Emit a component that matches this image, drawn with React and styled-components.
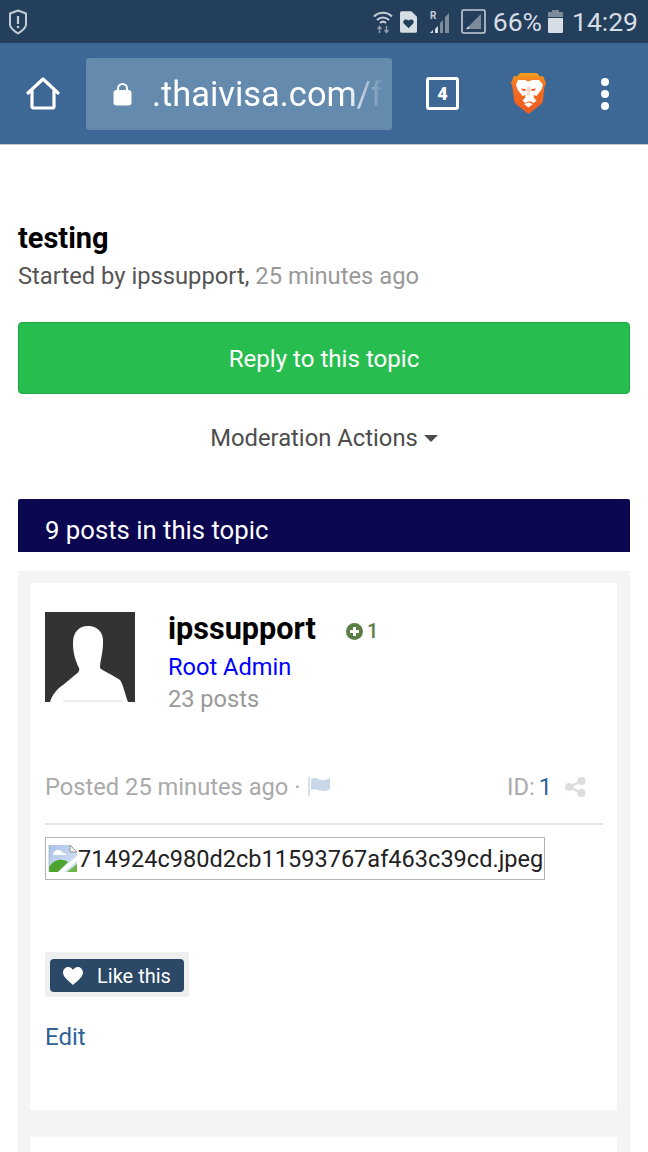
import styled, { createGlobalStyle } from 'styled-components';

const Global = createGlobalStyle`
  html, body {
    margin: 0;
    padding: 0;
    background: #fff;
    font-family: Roboto, "Liberation Sans", sans-serif;
  }
  * { box-sizing: border-box; }
`;

const Screen = styled.div`
  width: 648px;
  height: 1152px;
  overflow: hidden;
  display: flex;
  flex-direction: column;
`;

const StatusBar = styled.div`
  height: 43px;
  flex: none;
  background: #243f5c;
  display: flex;
  align-items: center;
  justify-content: space-between;
  padding: 0 10px 0 8px;
  color: #d6dde4;
`;

const StatusRight = styled.div`
  display: flex;
  align-items: center;
`;

const StatusText = styled.span`
  font-size: 26.5px;
  line-height: 43px;
  margin-left: ${(p) => p.$left || 0}px;
`;

const StatusIcon = styled.svg`
  display: block;
  margin-left: ${(p) => p.$left || 0}px;
`;

const Toolbar = styled.div`
  height: 102px;
  flex: none;
  background: #3d6794;
  border-bottom: 1px solid #c4c8cc;
  display: flex;
  align-items: center;
  padding: 0 0 0 26px;
`;

const UrlBox = styled.div`
  width: 306px;
  height: 72px;
  margin-left: 26px;
  background: #648aae;
  border-radius: 3px;
  display: flex;
  align-items: center;
  padding-left: 27px;
`;

const UrlText = styled.div`
  width: 236px;
  margin-left: 20px;
  font-size: 34.4px;
  color: #fff;
  white-space: nowrap;
  mask-image: linear-gradient(to right, #000 0, #000 195px, transparent 232px);
`;

const TabCount = styled.div`
  width: 33px;
  height: 33px;
  margin-left: 34px;
  border: 3px solid #fff;
  border-radius: 3px;
  color: #fff;
  font-size: 18px;
  font-weight: 900;
  display: flex;
  align-items: center;
  justify-content: center;
`;

const Dots = styled.div`
  margin-left: 55px;
  display: flex;
  flex-direction: column;
  gap: 4px;
`;

const Dot = styled.span`
  width: 8px;
  height: 8px;
  border-radius: 50%;
  background: #fff;
`;

const Content = styled.div`
  flex: 1;
  padding: 76px 18px 0;
`;

const Title = styled.h1`
  margin: 0;
  font-size: 29px;
  line-height: 34px;
  font-weight: 700;
  color: #000;
`;

const Byline = styled.div`
  margin-top: 6px;
  font-size: 23.75px;
  line-height: 30px;
  color: #555;
`;

const Muted = styled.span`
  color: #999;
`;

const ReplyButton = styled.div`
  margin-top: 31px;
  height: 72px;
  background: #28bd4f;
  border: 1px solid #22a544;
  border-radius: 4px;
  color: #fff;
  font-size: 24.1px;
  padding-top: 1px;
  display: flex;
  align-items: center;
  justify-content: center;
`;

const Moderation = styled.div`
  margin-top: 28px;
  height: 32px;
  display: flex;
  align-items: center;
  justify-content: center;
  gap: 6px;
  font-size: 23.8px;
  color: #4d4d4d;
`;

const Caret = styled.span`
  width: 0;
  height: 0;
  border-left: 7px solid transparent;
  border-right: 7px solid transparent;
  border-top: 7px solid #4d4d4d;
`;

const TopicBar = styled.div`
  margin-top: 45px;
  height: 53px;
  background: #0a0650;
  color: #fff;
  font-size: 25.7px;
  padding: 15px 0 0 27px;
  line-height: 32px;
  border-radius: 2px 2px 0 0;
`;

const Feed = styled.div`
  margin-top: 19px;
  background: #f4f4f4;
  padding: 12px 13px 12px 12px;
  display: flex;
  flex-direction: column;
  gap: 27px;
`;

const Post = styled.div`
  background: #fff;
  height: ${(p) => p.$height}px;
  padding: 29px 14px 0 15px;
`;

const Author = styled.div`
  display: flex;
`;

const Avatar = styled.svg`
  width: 90px;
  height: 90px;
  display: block;
  flex: none;
`;

const AuthorInfo = styled.div`
  margin-left: 33px;
  margin-top: -3px;
`;

const NameRow = styled.div`
  display: flex;
  align-items: center;
  height: 38px;
`;

const Name = styled.span`
  font-size: 30.6px;
  font-weight: 700;
  color: #000;
`;

const Rep = styled.span`
  margin-left: 30px;
  margin-top: 6px;
  display: flex;
  align-items: center;
  gap: 4px;
  font-size: 20px;
  font-weight: 500;
  color: #5a7d45;
`;

const Group = styled.div`
  margin-top: 5px;
  font-size: 23.6px;
  line-height: 30px;
  color: #0000ff;
`;

const PostCount = styled.div`
  margin-top: 2px;
  font-size: 23.6px;
  line-height: 30px;
  color: #999;
`;

const Meta = styled.div`
  margin-top: 56px;
  padding-right: 17px;
  height: 33px;
  display: flex;
  align-items: center;
  justify-content: space-between;
  font-size: 23.7px;
  color: #aaa;
`;

const MetaGroup = styled.div`
  display: flex;
  align-items: center;
`;

const PostId = styled.span`
  color: #2f6296;
  margin-left: 4px;
`;

const Divider = styled.div`
  margin-top: 20px;
  height: 2px;
  background: #e4e4e4;
`;

const BrokenImage = styled.div`
  margin-top: 12px;
  width: 500px;
  height: 43px;
  border: 1.5px solid #b4b4b4;
  display: flex;
  align-items: center;
  padding-left: 2px;
  font-size: 23.55px;
  color: #222;
  white-space: nowrap;
`;

const LikeWrap = styled.div`
  margin-top: 72px;
  width: 144px;
  height: 45px;
  background: #efefef;
  border-radius: 2px;
  padding: 7px 5px 5px;
`;

const LikeButton = styled.div`
  height: 33px;
  background: #2b4866;
  border-radius: 4px;
  color: #fff;
  font-size: 20px;
  display: flex;
  align-items: center;
  padding-left: 13px;
  gap: 14px;
`;

const EditLink = styled.div`
  margin-top: 24px;
  font-size: 24px;
  line-height: 32px;
  color: #2f6296;
`;

const ShieldIcon = () => (
  <svg width="20" height="26" viewBox="0 0 20 26" fill="none">
    <path d="M10 1.500 18 4.500v11c0 3-4 6.500-8 9-4-2.500-8-6-8-9v-11z" stroke="#c3ccd4" strokeWidth="2" strokeLinejoin="round" />
    <path d="M10 7v8" stroke="#c3ccd4" strokeWidth="2.200" />
    <circle cx="10" cy="18" r="1.300" fill="#c3ccd4" />
  </svg>
);

const WifiIcon = () => (
  <StatusIcon width="20" height="24" viewBox="0 0 20 24" fill="none" stroke="#c5ced6" strokeWidth="2">
    <path d="M1 6.500c5-5 13-5 18 0" />
    <path d="M4 10c3.500-3.500 8.500-3.500 12 0" />
    <path d="M7 13c2-1.800 4-1.800 6 0" />
    <path d="M6.500 23v-6M4.500 19l2-2.500 2 2.500M13.500 16v6M11.500 20l2 2.500 2-2.500" stroke="#8b98a5" strokeWidth="1.500" />
  </StatusIcon>
);

const SimIcon = () => (
  <StatusIcon $left={7} width="17" height="22" viewBox="0 0 18 23">
    <path d="M2 0h10l6 6v15a2 2 0 0 1-2 2H2a2 2 0 0 1-2-2V2a2 2 0 0 1 2-2z" fill="#d6dde4" />
    <path d="M9 18 4 13c-2-3 2-6 5-3 3-3 7 0 5 3z" fill="#243f5c" />
  </StatusIcon>
);

const SignalIcon = () => (
  <StatusIcon $left={13} width="20" height="24" viewBox="0 0 20 24">
    <text x="0" y="9" fontSize="10" fontWeight="700" fill="#c5ced6" fontFamily="Roboto, sans-serif">R</text>
    <path d="M0 23h3v-3z" fill="#d6dde4" />
    <path d="M5 23h3v-7l-3 3z" fill="#d6dde4" />
    <path d="M10 23h3V10l-3 3z" fill="#7d8c9b" />
    <path d="M15 23h4V3l-4 4z" fill="#7d8c9b" />
  </StatusIcon>
);

const Signal2Icon = () => (
  <StatusIcon $left={11} width="25" height="25" viewBox="0 0 25 25">
    <rect x="1" y="1" width="23" height="23" rx="1.500" fill="none" stroke="#c5ced6" strokeWidth="1.600" />
    <path d="M20 5v15H5z" fill="#7d8c9b" />
    <path d="M5 20h3v-3z" fill="#d6dde4" />
  </StatusIcon>
);

const BatteryIcon = () => (
  <StatusIcon $left={6} width="15" height="23" viewBox="0 0 15 23">
    <path d="M4 0h7v2h3a1 1 0 0 1 1 1v4H0V3a1 1 0 0 1 1-1h3z" fill="#7d8c9b" />
    <path d="M0 8h15v14a1 1 0 0 1-1 1H1a1 1 0 0 1-1-1z" fill="#d6dde4" />
  </StatusIcon>
);

const HomeIcon = () => (
  <svg width="34" height="33" viewBox="0 0 34 33" fill="none" stroke="#fff" strokeWidth="3.200" strokeLinejoin="round" strokeLinecap="round">
    <path d="M2 16 17 2l15 14" />
    <path d="M6 14v15.500a1.500 1.500 0 0 0 1.500 1.500h19a1.500 1.500 0 0 0 1.500-1.500V14" />
  </svg>
);

const LockIcon = () => (
  <svg width="19" height="24" viewBox="0 0 19 24" style={{ flex: 'none' }}>
    <path d="M5 10V6.500a4.500 4.500 0 0 1 9 0V10" fill="none" stroke="#fff" strokeWidth="2" />
    <rect x="0.500" y="8" width="18" height="15.500" rx="3" fill="#fff" />
  </svg>
);

const BraveIcon = () => (
  <svg width="35" height="41" viewBox="0 0 35 41" style={{ marginLeft: 52 }}>
    <defs>
      <linearGradient id="braveTop" x1="0" y1="0" x2="0" y2="1">
        <stop offset="0" stopColor="#f6a01c" />
        <stop offset="0.280" stopColor="#f5701f" />
        <stop offset="1" stopColor="#f05a22" />
      </linearGradient>
    </defs>
    <path d="M9 0h17l3 3.500 3-.5 3 7-1.500 4L32 27c-.5 3-2 4.500-5 6.500L17.500 41 8 33.500c-3-2-4.500-3.500-5-6.500L1.500 14 0 10l3-7 3 .5z" fill="url(#braveTop)" />
    <path d="M7 7h7c1.500 1 2.500 1.300 3.500 1.300S19.500 8 21 7h7l4 4.500-1.500 5-5 6.500-3-1 .5 3 2.500 2.500-2.500 2.500-3.500-1.500h-2L14 30l-2.500-2.500L14 25l.5-3-3 1-5-6.500-1.500-5z" fill="#fff" />
    <path d="M10 15.500l4.500.5 .5 1.500-3 .5zM25 15.500l-4.500.5-.5 1.500 3 .5z" fill="#f05a22" />
    <path d="M15.500 13.500h4l-.5 9h-3z" fill="#fbd9c6" />
    <path d="M13 31l4.500-1.500L22 31l-4.500 3.500z" fill="#fff" />
  </svg>
);

const FlagIcon = () => (
  <svg width="23" height="19" viewBox="0 0 23 19" style={{ marginLeft: 8 }}>
    <path d="M1 0v19" stroke="#c8d6e4" strokeWidth="1.500" />
    <path d="M3 2c5-3 8 2 13 1 2 0 4-1 6-2v11c-2 1.500-4 2-6 2-5 .5-8-3.500-13-1z" fill="#c8d8e8" />
  </svg>
);

const ShareIcon = () => (
  <svg width="21" height="20" viewBox="0 0 21 20" style={{ marginLeft: 13 }}>
    <path d="M16 4 5 10l11 6" fill="none" stroke="#ddd" strokeWidth="2.500" />
    <circle cx="16.500" cy="4" r="4" fill="#ddd" />
    <circle cx="4" cy="10" r="4" fill="#ddd" />
    <circle cx="16.500" cy="16" r="4" fill="#ddd" />
  </svg>
);

const BrokenGlyph = () => (
  <svg width="30" height="28" viewBox="0 0 30 28" style={{ flex: 'none' }}>
    <defs>
      <linearGradient id="skyFill" x1="0" y1="0" x2="1" y2="1">
        <stop offset="0" stopColor="#a9c2e8" />
        <stop offset="1" stopColor="#dbe6f6" />
      </linearGradient>
    </defs>
    <path d="M1 0h21l7 7v20H1z" fill="url(#skyFill)" />
    <path d="M22 0v7h7z" fill="#f4f4f4" stroke="#999" strokeWidth="1" />
    <path d="M5 9c1-3 3-4 5-4s4 1 5 3c2 0 3 1 3 2H5z" fill="#fff" />
    <path d="M1 27v-5c5-8 13-9 19-5l-10 10z" fill="#4ea52e" />
    <path d="M10 27 29 11v5L16 27z" fill="#fff" />
    <path d="M19 27l10-8v8z" fill="#6cb646" />
    <path d="M1 27V0" stroke="#9aa" strokeWidth="0.600" />
  </svg>
);

const PlusIcon = () => (
  <svg width="17" height="17" viewBox="0 0 17 17">
    <circle cx="8.500" cy="8.500" r="8.500" fill="#5a7d45" />
    <path d="M8.500 4v9M4 8.500h9" stroke="#fff" strokeWidth="3" />
  </svg>
);

const HeartIcon = () => (
  <svg width="20" height="18" viewBox="0 0 20 18">
    <path d="M10 18C7 15 0 10.500 0 5.500 0 2.500 2.200 0 5.200 0 7.200 0 9 1 10 3c1-2 2.800-3 4.800-3 3 0 5.200 2.500 5.200 5.500 0 5-7 9.500-10 12.500z" fill="#fff" />
  </svg>
);

const App = () => {
  return (
    <Screen>
      <Global />
      <StatusBar>
        <ShieldIcon />
        <StatusRight>
          <WifiIcon />
          <SimIcon />
          <SignalIcon />
          <Signal2Icon />
          <StatusText $left={7}>66%</StatusText>
          <BatteryIcon />
          <StatusText $left={9}>14:29</StatusText>
        </StatusRight>
      </StatusBar>

      <Toolbar>
        <HomeIcon />
        <UrlBox>
          <LockIcon />
          <UrlText>.thaivisa.com/f</UrlText>
        </UrlBox>
        <TabCount>4</TabCount>
        <BraveIcon />
        <Dots>
          <Dot />
          <Dot />
          <Dot />
        </Dots>
      </Toolbar>

      <Content>
        <Title>testing</Title>
        <Byline>Started by ipssupport, <Muted>25 minutes ago</Muted></Byline>
        <ReplyButton>Reply to this topic</ReplyButton>
        <Moderation>Moderation Actions <Caret /></Moderation>
        <TopicBar>9 posts in this topic</TopicBar>
        <Feed>
          <Post $height={527}>
            <Author>
              <Avatar viewBox="0 0 90 90">
                <rect width="90" height="90" fill="#333" />
                <path d="M5 90C7 83 12 77 18 73L30 63C33 61 35 59 34 56C31 50 28 42 28 31C28 20 34 14 43 14C53 14 59 21 58 31C58 41 55 49 55 56C58 59 68 63 75 68C78 72 80 82 83 90Z" fill="#fff" />
                <path d="M18 89h60" stroke="#ddd" strokeWidth="1" />
              </Avatar>
              <AuthorInfo>
                <NameRow>
                  <Name>ipssupport</Name>
                  <Rep><PlusIcon /> 1</Rep>
                </NameRow>
                <Group>Root Admin</Group>
                <PostCount>23 posts</PostCount>
              </AuthorInfo>
            </Author>
            <Meta>
              <MetaGroup>Posted 25 minutes ago · <FlagIcon /></MetaGroup>
              <MetaGroup>ID: <PostId>1</PostId> <ShareIcon /></MetaGroup>
            </Meta>
            <Divider />
            <BrokenImage><BrokenGlyph />714924c980d2cb11593767af463c39cd.jpeg</BrokenImage>
            <LikeWrap>
              <LikeButton><HeartIcon /> Like this</LikeButton>
            </LikeWrap>
            <EditLink>Edit</EditLink>
          </Post>
          <Post $height={200} />
        </Feed>
      </Content>
    </Screen>
  );
};

export default App;
